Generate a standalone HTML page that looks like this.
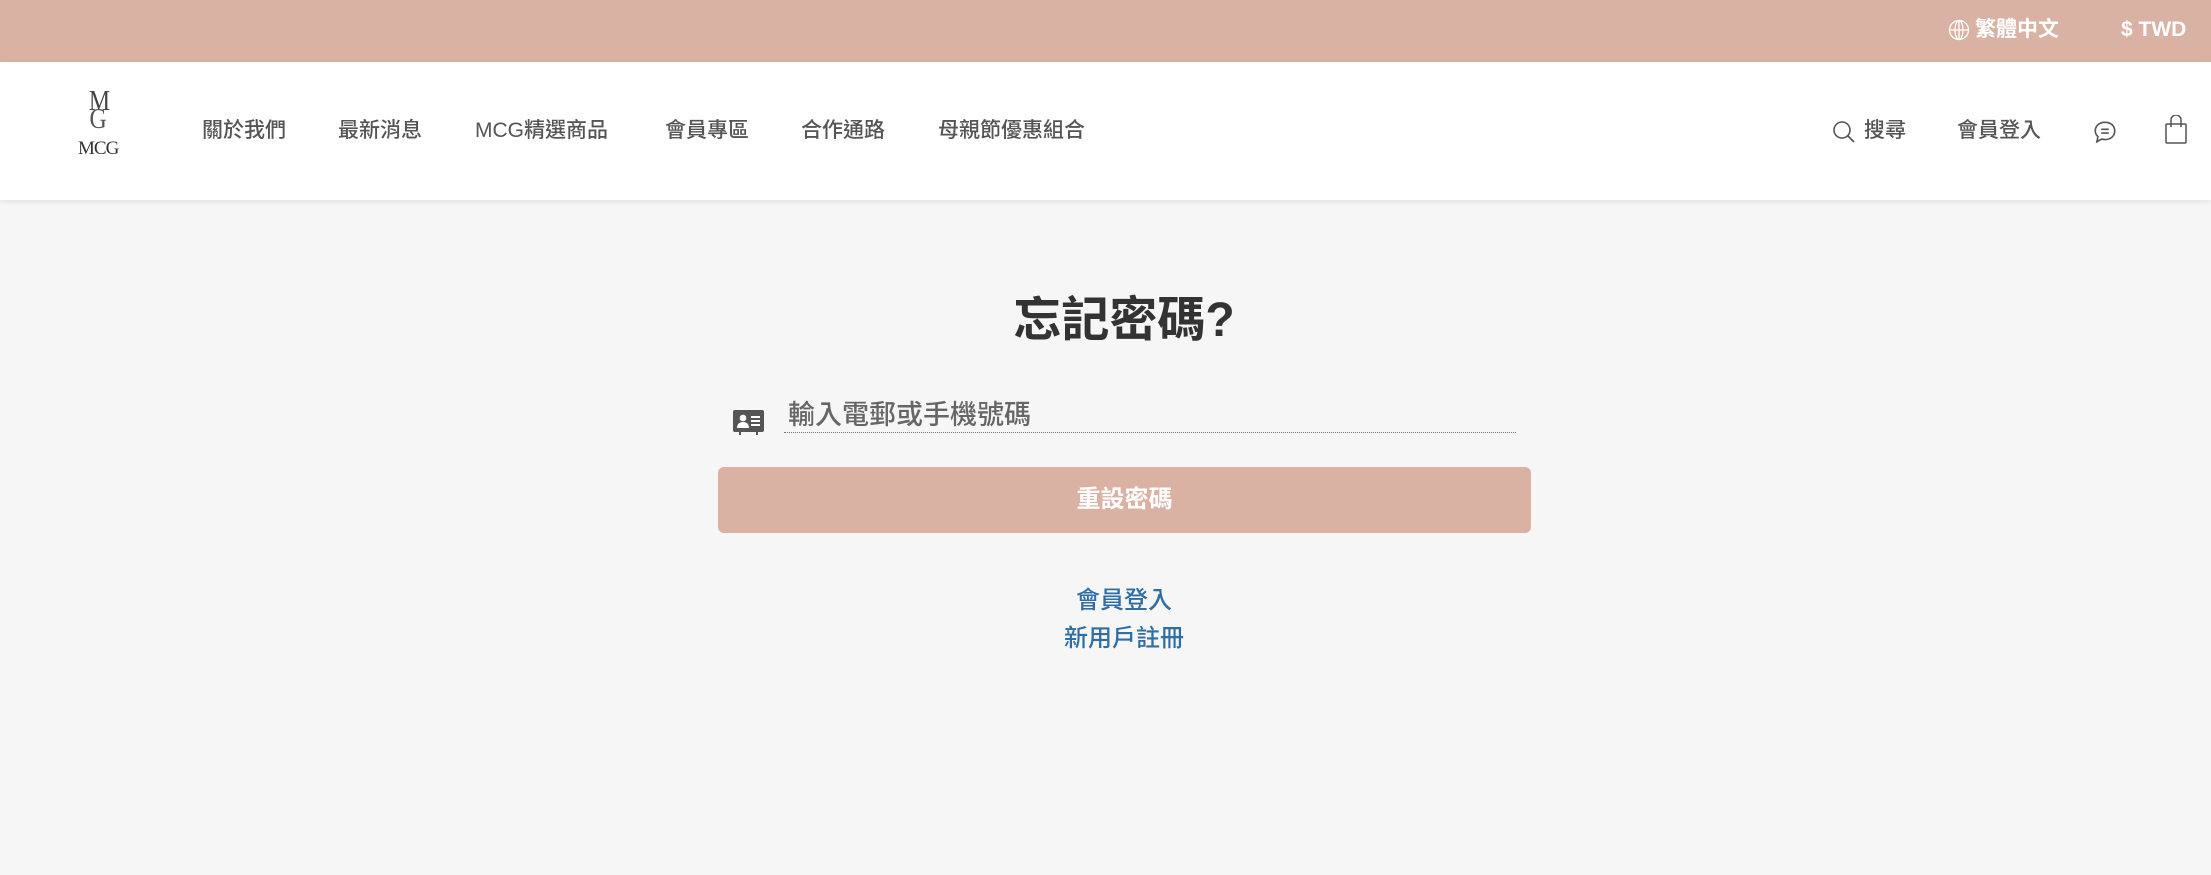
<!DOCTYPE html>
<html><head><meta charset="utf-8"><style>
*{margin:0;padding:0;box-sizing:border-box}
body{width:2211px;height:875px;background:#f6f6f6;font-family:"Liberation Sans","Noto Sans CJK TC",sans-serif;position:relative;overflow:hidden}
.top{position:absolute;left:0;top:0;width:2211px;height:62px;background:#d9b2a4;color:#fff;font-size:21px;font-weight:bold}
.hdr{position:absolute;left:0;top:62px;width:2211px;height:138px;background:#fff;box-shadow:0 2px 5px rgba(0,0,0,.08)}
.a{position:absolute;white-space:nowrap}
.nav{color:#555;font-size:21px;top:117px;line-height:28px;font-weight:500}
</style></head><body>
<div class="top">
<svg class="a" style="left:1948px;top:19px" width="22" height="22" viewBox="0 0 22 22" fill="none" stroke="#fff" stroke-width="1.3"><circle cx="11" cy="11" r="9.5"/><ellipse cx="11" cy="11" rx="4" ry="9.5"/><line x1="1.5" y1="11" x2="20.5" y2="11"/><line x1="11" y1="1.5" x2="11" y2="20.5"/></svg>
<div class="a" style="left:1975px;top:16px;line-height:28px">繁體中文</div>
<div class="a" style="left:2121px;top:16px;line-height:28px">$ TWD</div>
</div>
<div class="hdr"></div>
<div class="a" style="left:87px;top:88px;font-family:'Liberation Serif',serif;font-size:28px;color:#444;line-height:28px;transform:scaleX(0.85)">M</div>
<div class="a" style="left:88px;top:106px;font-family:'Liberation Serif',serif;font-size:28px;color:#555;line-height:28px;transform:scaleX(0.85)">G</div>
<div class="a" style="left:78px;top:138px;font-family:'Liberation Serif',serif;font-size:19px;color:#333;line-height:22px;letter-spacing:-1px">MCG</div>
<div class="a nav" style="left:202px">關於我們</div>
<div class="a nav" style="left:338px">最新消息</div>
<div class="a nav" style="left:475px">MCG精選商品</div>
<div class="a nav" style="left:665px">會員專區</div>
<div class="a nav" style="left:801px">合作通路</div>
<div class="a nav" style="left:938px">母親節優惠組合</div>
<svg class="a" style="left:1832px;top:120px" width="24" height="24" viewBox="0 0 24 24" fill="none" stroke="#555" stroke-width="1.6"><circle cx="10" cy="10" r="8"/><line x1="16" y1="16" x2="22" y2="22"/></svg>
<div class="a nav" style="left:1864px">搜尋</div>
<div class="a nav" style="left:1957px">會員登入</div>
<svg class="a" style="left:2092px;top:119px" width="26" height="26" viewBox="0 0 24 24" fill="none" stroke="#555" stroke-width="1.5"><path d="M12 3C6.5 3 3 6.5 3 11c0 2.2 1 4 2.5 5.2L4.5 21l4.5-2.5c1 .3 2 .5 3 .5 5.5 0 9-3.5 9-8S17.5 3 12 3z"/><line x1="8.5" y1="9.5" x2="15.5" y2="9.5"/><line x1="8.5" y1="13" x2="15.5" y2="13"/></svg>
<svg class="a" style="left:2164px;top:115px" width="24" height="30" viewBox="0 0 24 30" fill="none" stroke="#555" stroke-width="1.5"><rect x="2" y="9" width="20" height="19" rx="1"/><path d="M7 12V5a5 5 0 0 1 10 0v7"/></svg>
<div class="a" style="left:0;width:2248px;text-align:center;top:291px;font-size:48px;font-weight:bold;color:#333;line-height:60px">忘記密碼?</div>
<svg class="a" style="left:733px;top:410px" width="31" height="25" viewBox="0 0 31 25"><rect x="0" y="0" width="31" height="22" rx="2" fill="#555"/><rect x="6" y="21" width="2" height="4" fill="#555"/><rect x="23" y="21" width="2" height="4" fill="#555"/><circle cx="10" cy="8" r="3.3" fill="#fff"/><path d="M4 18c0-4 2.5-6 6-6s6 2 6 6z" fill="#fff"/><rect x="18" y="6" width="9" height="2" fill="#fff"/><rect x="18" y="10" width="9" height="2" fill="#fff"/><rect x="18" y="14" width="9" height="2" fill="#fff"/></svg>
<div class="a" style="left:788px;top:398px;font-size:27px;color:#666;line-height:34px;font-weight:500">輸入電郵或手機號碼</div>
<div class="a" style="left:784px;top:432px;width:732px;border-top:1.5px dotted #777"></div>
<div class="a" style="left:718px;top:467px;width:813px;height:66px;background:#d9b2a4;border-radius:6px;color:#fff;font-size:24px;font-weight:bold;text-align:center;line-height:66px">重設密碼</div>
<div class="a" style="left:0;width:2248px;text-align:center;top:585px;font-size:24px;color:#2f6ea5;line-height:32px;font-weight:500">會員登入</div>
<div class="a" style="left:0;width:2248px;text-align:center;top:623px;font-size:24px;color:#2f6ea5;line-height:32px;font-weight:500">新用戶註冊</div>
</body></html>
